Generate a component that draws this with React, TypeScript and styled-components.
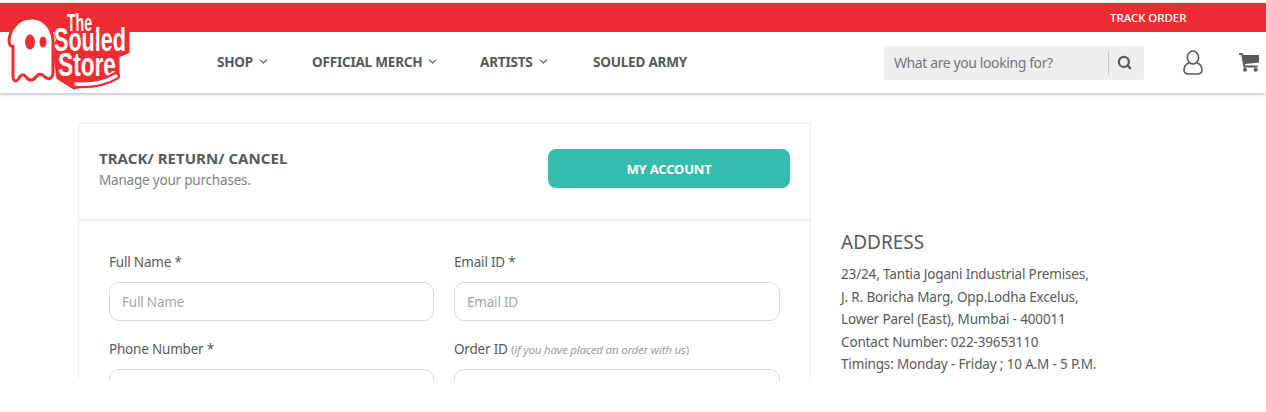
import React from 'react'
import styled, { createGlobalStyle } from 'styled-components'
import { ChevronDown, Search } from 'lucide-react'

const GlobalStyle = createGlobalStyle`
  html, body {
    margin: 0;
    padding: 0;
    background: #fff;
    font-family: "Noto Sans", "Liberation Sans", sans-serif;
    color: #58595b;
  }
  * { box-sizing: border-box; }
`

const navItems = [
  { label: 'SHOP', width: 95, caret: true },
  { label: 'OFFICIAL MERCH', width: 168, caret: true },
  { label: 'ARTISTS', width: 113, caret: true },
  { label: 'SOULED ARMY', width: 100, caret: false },
]

function Logo() {
  return (
    <LogoBox>
      <LogoSvg width="140" height="95" viewBox="0 0 140 95">
        <path d="M9 40 C10 32 13 28 15 26 C19 20 26 18 32 18 C44 18 52 28 53 40 L53 72 C53 80 47 80 44 76 C41 73 38 74 36 77 C33 81 29 81 26 77 C24 74 21 74 19 78 C16 83 13 81 13 76 L13 46 C10 47 9 44 9 40 Z" fill="#fff" stroke="#ee2d32" strokeWidth="3" strokeLinejoin="round" />
        <ellipse cx="30" cy="42" rx="5" ry="7.5" fill="#ee2d32" />
        <ellipse cx="43" cy="42" rx="3.5" ry="5.5" fill="#ee2d32" />
        <path d="M54 50 L66 14 L92 14 L128 22 L128 52 L118 56 L118 76 L74 88 L58 78 Z" fill="#ee2d32" stroke="#ee2d32" strokeWidth="3" strokeLinejoin="round" />
        <LogoWord x="67" y="31" fontSize="23" textLength="25" lengthAdjust="spacingAndGlyphs">The</LogoWord>
        <LogoWord x="54" y="51" fontSize="33" textLength="72" lengthAdjust="spacingAndGlyphs">Souled</LogoWord>
        <LogoWord x="58" y="76" fontSize="34" textLength="58" lengthAdjust="spacingAndGlyphs">Store</LogoWord>
        <path d="M76 84 C90 85 104 83 116 76" fill="none" stroke="#ee2d32" strokeWidth="8" strokeLinecap="round" />
        <path d="M76 84 C90 85 104 83 116 76" fill="none" stroke="#fff" strokeWidth="3.5" strokeLinecap="round" />
      </LogoSvg>
    </LogoBox>
  )
}

function UserIcon() {
  return (
    <svg width="20" height="25" viewBox="0 0 20 25" fill="none" stroke="#58595b" strokeWidth="1.6">
      <ellipse cx="10" cy="7.5" rx="5.6" ry="6.5" />
      <path d="M6.4 12.5 C3 14 1 17 1 20 C1 23 3 24 6 24 H14 C17 24 19 23 19 20 C19 17 17 14 13.6 12.5" strokeLinejoin="round" />
    </svg>
  )
}

function CartIcon() {
  return (
    <svg width="20" height="19" viewBox="0 0 20 19" fill="#58595b">
      <path d="M0 0 H3.6 L4.2 2 H20 V9.6 L6 11 L6.3 12.6 H18.6 V14.4 H4.6 L2.2 1.8 H0 Z" />
      <circle cx="6" cy="16.8" r="2" />
      <circle cx="16.6" cy="16.8" r="2" />
    </svg>
  )
}

export default function App() {
  return (
    <Page>
      <GlobalStyle />
      <Header>
        <TopBar>
          <TrackLink>TRACK ORDER</TrackLink>
        </TopBar>
        <NavBar>
          <Logo />
          <NavList>
            {navItems.map((item) => (
              <NavItem key={item.label} $width={item.width}>
                {item.label}
                {item.caret && <ChevronDown size={13} strokeWidth={2} />}
              </NavItem>
            ))}
          </NavList>
          <SearchBox>
            <SearchText>What are you looking for?</SearchText>
            <SearchButton>
              <Search size={15} strokeWidth={3.6} />
            </SearchButton>
          </SearchBox>
          <IconSlot $left={39}>
            <UserIcon />
          </IconSlot>
          <IconSlot $left={36}>
            <CartIcon />
          </IconSlot>
        </NavBar>
      </Header>

      <Main>
        <Card>
          <CardHead>
            <div>
              <Title>TRACK/ RETURN/ CANCEL</Title>
              <Subtitle>Manage your purchases.</Subtitle>
            </div>
            <AccountButton>MY ACCOUNT</AccountButton>
          </CardHead>
          <Form>
            <Field>
              <Label>Full Name *</Label>
              <Input placeholder="Full Name" />
            </Field>
            <Field>
              <Label>Email ID *</Label>
              <Input placeholder="Email ID" />
            </Field>
            <Field>
              <Label>Phone Number *</Label>
              <Input />
            </Field>
            <Field>
              <Label>
                Order ID <Hint>(<em>if you have placed an order with us</em>)</Hint>
              </Label>
              <Input />
            </Field>
          </Form>
        </Card>
        <Aside>
          <AsideTitle>ADDRESS</AsideTitle>
          <AsideLine>23/24, Tantia Jogani Industrial Premises,</AsideLine>
          <AsideLine>J. R. Boricha Marg, Opp.Lodha Excelus,</AsideLine>
          <AsideLine>Lower Parel (East), Mumbai - 400011</AsideLine>
          <AsideLine>Contact Number: 022-39653110</AsideLine>
          <AsideLine>Timings: Monday - Friday ; 10 A.M - 5 P.M.</AsideLine>
        </Aside>
      </Main>
    </Page>
  )
}

const Page = styled.div`
  width: 1266px;
  height: 412px;
  overflow: hidden;
  padding-top: 3px;
  background: #fff;
`

const Header = styled.header`
  position: relative;
  box-shadow: 0 1px 4px rgba(0, 0, 0, 0.3);
`

const TopBar = styled.div`
  height: 29px;
  background: #ee2d32;
  display: flex;
  align-items: center;
  padding-left: 1110px;
`

const TrackLink = styled.a`
  color: #fff;
  font-size: 11.5px;
  font-weight: 500;
  letter-spacing: -0.05px;
`

const NavBar = styled.nav`
  height: 61px;
  background: #fff;
  display: flex;
  align-items: center;
  padding-left: 217px;
`

const LogoBox = styled.div`
  position: absolute;
  left: 0;
  top: -3px;
  line-height: 0;
`

const LogoSvg = styled.svg`
  overflow: visible;
`

const LogoWord = styled.text`
  font-family: "Liberation Sans", sans-serif;
  font-weight: 700;
  fill: #fff;
  stroke: #ee2d32;
  stroke-width: 3px;
  stroke-linejoin: round;
  paint-order: stroke;
`

const NavList = styled.div`
  display: flex;
  width: 667px;
  padding-bottom: 2px;
`

const NavItem = styled.a<{ $width: number }>`
  width: ${(p) => p.$width}px;
  display: flex;
  align-items: center;
  gap: 4px;
  font-size: 13.5px;
  font-weight: 700;
  letter-spacing: -0.2px;
  color: #58595b;
  white-space: nowrap;
`

const SearchBox = styled.div`
  width: 260px;
  height: 34px;
  background: #eee;
  border-radius: 3px;
  display: flex;
  align-items: center;
  padding-left: 10px;
`

const SearchText = styled.span`
  width: 214px;
  font-size: 14px;
  letter-spacing: -0.4px;
  color: #75777a;
  white-space: nowrap;
`

const SearchButton = styled.span`
  height: 24px;
  width: 32px;
  border-left: 1px solid #c9c9c9;
  display: flex;
  align-items: center;
  justify-content: center;
  color: #58595b;
`

const IconSlot = styled.span<{ $left: number }>`
  margin-left: ${(p) => p.$left}px;
  display: flex;
  line-height: 0;
`

const Main = styled.main`
  height: 288px;
  overflow: hidden;
  display: flex;
  align-items: flex-start;
  padding: 30px 0 0 78px;
`

const Card = styled.section`
  width: 733px;
  border: 1px solid #eee;
`

const CardHead = styled.div`
  height: 97px;
  border-bottom: 2px solid #eee;
  display: flex;
  align-items: flex-start;
  justify-content: space-between;
  padding: 24px 20px 0;
`

const Title = styled.h2`
  margin: 0;
  font-size: 15px;
  line-height: 20px;
  font-weight: 700;
  letter-spacing: 0.05px;
  color: #58595b;
`

const Subtitle = styled.p`
  margin: 4px 0 0;
  font-size: 13.5px;
  line-height: 17px;
  letter-spacing: -0.2px;
  color: #818286;
`

const AccountButton = styled.button`
  width: 242px;
  height: 39px;
  margin-top: 1px;
  border: 0;
  border-radius: 8px;
  background: #36bcac;
  color: #fff;
  font-family: inherit;
  font-size: 13px;
  font-weight: 700;
  letter-spacing: -0.2px;
`

const Form = styled.div`
  display: grid;
  grid-template-columns: 325px 326px;
  column-gap: 20px;
  row-gap: 18px;
  padding: 31px 30px 0;
`

const Field = styled.div`
  display: flex;
  flex-direction: column;
`

const Label = styled.label`
  height: 20px;
  font-size: 13.5px;
  line-height: 20px;
  letter-spacing: -0.2px;
  color: #58595b;
  margin-bottom: 10px;
  white-space: nowrap;
`

const Hint = styled.span`
  font-size: 11.5px;
  color: #9b9ca0;
`

const Input = styled.input`
  height: 39px;
  border: 1px solid #d9d9d9;
  border-radius: 10px;
  padding: 0 12px;
  font-family: inherit;
  font-size: 13.5px;
  letter-spacing: -0.2px;
  outline: none;
  &::placeholder {
    color: #a4a5a8;
  }
`

const Aside = styled.aside`
  margin-left: 30px;
  padding-top: 106px;
`

const AsideTitle = styled.h3`
  margin: 0 0 8px;
  font-size: 19px;
  line-height: 26px;
  font-weight: 400;
  color: #58595b;
`

const AsideLine = styled.p`
  margin: 0;
  font-size: 13.5px;
  line-height: 22.5px;
  letter-spacing: -0.15px;
  color: #58595b;
  white-space: nowrap;
`
